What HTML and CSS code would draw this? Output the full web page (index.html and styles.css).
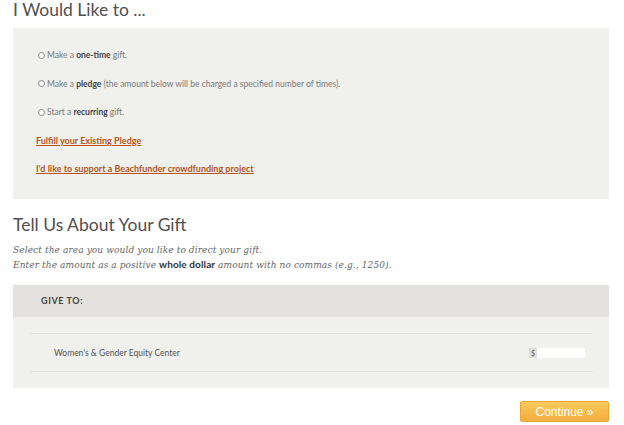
FILE: index.html
```html
<!DOCTYPE html>
<html>
<head>
<meta charset="utf-8">
<link rel="stylesheet" href="styles.css">
</head>
<body>
<div class="page">
  <h2 class="title">I Would Like to ...</h2>
  <div class="box options">
    <label class="opt"><span class="radio"></span>Make a <b>one-time</b> gift.</label>
    <label class="opt"><span class="radio"></span>Make a <b>pledge</b> (the amount below will be charged a specified number of times).</label>
    <label class="opt"><span class="radio"></span>Start a <b>recurring</b> gift.</label>
    <a class="link" href="#">Fulfill your Existing Pledge</a>
    <a class="link" href="#">I'd like to support a Beachfunder crowdfunding project</a>
  </div>
  <h2 class="title title2">Tell Us About Your Gift</h2>
  <p class="intro">Select the area you would you like to direct your gift.<br>Enter the amount as a positive <b>whole dollar</b> amount with no commas (e.g., 1250).</p>
  <div class="give">
    <div class="give-head">GIVE TO:</div>
    <div class="give-body">
      <div class="fund">
        <span class="fund-name">Women's &amp; Gender Equity Center</span>
        <span class="amount"><span class="dollar">$</span><span class="input"></span></span>
      </div>
    </div>
  </div>
  <div class="actions"><button class="btn">Continue »</button></div>
</div>
</body>
</html>
```
FILE: styles.css
```css
html, body { margin: 0; padding: 0; background: #fff; }
body { font-family: Lato, "Open Sans", sans-serif; color: #555; }
.page { padding: 0 15px 0 13px; }
.title {
  margin: 0;
  font-weight: 400;
  font-size: 17.5px;
  line-height: 18px;
  color: #505050;
  padding-top: 1px;
  height: 27px;
}
.box { background: #f0f0ec; }
.options {
  display: flex;
  flex-direction: column;
  align-items: flex-start;
  gap: 16.5px;
  padding: 21px 23px 24px 23px;
}
.opt {
  display: flex;
  align-items: center;
  font-size: 8.5px;
  color: #7a7a7a;
  height: 12px;
  flex-shrink: 0;
  white-space: pre;
}
.opt b { color: #444; font-weight: 700; }
.radio {
  width: 5px; height: 5px;
  border: 1px solid #888;
  border-radius: 50%;
  margin: 0 2px 0 2px;
  background: #fff;
}
.link {
  font-size: 9px;
  font-weight: 700;
  color: #b5541c;
  text-decoration: underline;
  height: 12px;
  line-height: 12px;
  flex-shrink: 0;
}
.title2 { margin-top: 16px; height: 26.5px; }
.intro {
  margin: 0;
  font-family: "DejaVu Serif", serif;
  font-style: italic;
  font-size: 9px;
  line-height: 15px;
  color: #666;
  height: 42.5px;
  letter-spacing: 0.1px;
}
.intro b { font-style: normal; font-weight: 700; color: #333; font-family: Lato, sans-serif; font-size: 10px; line-height: 0; }
.give-head {
  background: #e3e2de;
  height: 32px;
  line-height: 32px;
  padding-left: 28px;
  font-size: 9px;
  font-weight: 700;
  letter-spacing: 0.6px;
  color: #444;
}
.give-body { background: #f0f0ec; padding: 16px 16px 16px 17px; }
.fund {
  display: flex;
  justify-content: space-between;
  align-items: center;
  height: 37px;
  border-top: 1px solid #e4e4df;
  border-bottom: 1px solid #e4e4df;
  padding: 0 8px 0 24px;
}
.fund-name { font-size: 8.5px; color: #555; }
.amount { display: flex; align-items: center; }
.dollar {
  background: #dedede;
  font-size: 7px;
  color: #666;
  height: 10px;
  line-height: 10px;
  padding: 0 2px;
}
.input { background: #fff; width: 48px; height: 10px; }
.actions { display: flex; justify-content: flex-end; padding-top: 13px; }
.btn {
  width: 89px;
  height: 21px;
  border: 1px solid #e8a83a;
  border-radius: 2px;
  background: linear-gradient(#fcc95c, #f2ad3d);
  color: #fff;
  font-family: "Liberation Sans", Arial, sans-serif;
  font-size: 12px;
  padding: 0;
  box-shadow: 0 1px 1px rgba(0,0,0,0.15);
}
```
